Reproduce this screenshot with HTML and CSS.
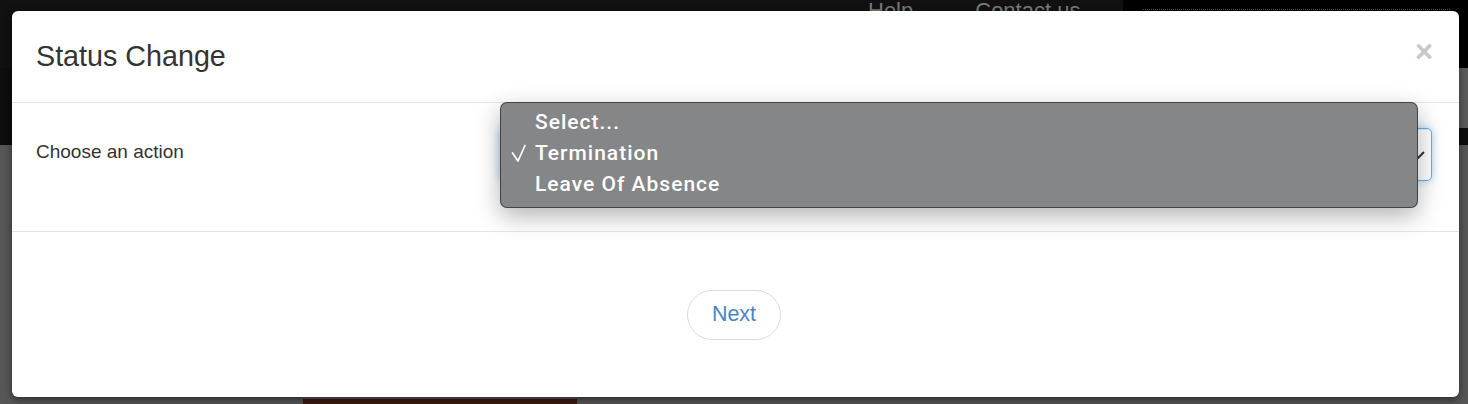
FILE: index.html
```html
<!DOCTYPE html>
<html lang="en">
<head>
<meta charset="utf-8">
<title>Status Change</title>
<link rel="stylesheet" href="styles.css">
</head>
<body>
  <div class="page">
    <header class="nav">
      <nav class="nav-main">
        <a class="nav-link">Help</a>
        <a class="nav-link">Contact us</a>
      </nav>
      <div class="nav-dark"><span class="dots"></span></div>
    </header>
    <div class="sub">
      <div class="sub-left"></div>
      <div class="sub-right"></div>
    </div>
    <main class="main">
      <div class="brown"></div>
    </main>
  </div>

  <div class="modal">
    <div class="modal-header">
      <h4 class="modal-title">Status Change</h4>
      <span class="close">&times;</span>
    </div>
    <div class="modal-body">
      <label class="label">Choose an action</label>
      <div class="select">
        <svg class="arrow" width="16" height="9" viewBox="0 0 16 9"><polyline points="1,1 8,8 15,1" fill="none" stroke="#333" stroke-width="2"/></svg>
        <ul class="menu">
          <li class="item">Select...</li>
          <li class="item">
            <svg class="check" width="16" height="19" viewBox="0 0 16 19"><polyline points="1.5,9 7,17 14,1.5" fill="none" stroke="#fff" stroke-width="1.7" stroke-linejoin="round" stroke-linecap="round"/></svg>
            Termination
          </li>
          <li class="item">Leave Of Absence</li>
        </ul>
      </div>
    </div>
    <div class="modal-footer">
      <button class="btn-next">Next</button>
    </div>
  </div>
</body>
</html>
```

FILE: styles.css
```css
html, body {
  margin: 0;
  padding: 0;
}

body {
  width: 1468px;
  height: 404px;
  overflow: hidden;
  position: relative;
  font-family: "Liberation Sans", Arial, sans-serif;
  background: #585858;
}

.page {
  display: flex;
  flex-direction: column;
  height: 404px;
}

.nav {
  height: 68px;
  display: flex;
  background: #111;
}

.nav-main {
  width: 1123px;
  display: flex;
  gap: 62px;
  padding-left: 868px;
  box-sizing: border-box;
}

.nav-link {
  color: #7a7a7a;
  font-size: 22px;
  line-height: 1;
}

.nav-dark {
  flex: 1;
  background: #000;
  padding: 9px 18px 0 20px;
}

.dots {
  display: block;
  border-top: 1px dotted #555;
}

.sub {
  height: 77px;
  display: flex;
}

.sub-left {
  width: 400px;
  background: #0d0d0d;
}

.sub-right {
  flex: 1;
  background: linear-gradient(#5c5c5c 0 60px, #0d0d0d 60px);
}

.main {
  flex: 1;
  display: flex;
  flex-direction: column;
  justify-content: flex-end;
  background: #575757;
}

.brown {
  margin-left: 303px;
  width: 274px;
  height: 5px;
  background: #3b1b12;
}

/* Modal */
.modal {
  position: absolute;
  top: 11px;
  left: 12px;
  width: 1447px;
  height: 386px;
  background: #fff;
  border-radius: 6px;
  box-shadow: 0 3px 9px rgba(0, 0, 0, 0.5);
  display: flex;
  flex-direction: column;
}

.modal-header {
  height: 92px;
  box-sizing: border-box;
  padding: 0 26px 0 24px;
  display: flex;
  align-items: center;
  justify-content: space-between;
  border-bottom: 1px solid #e5e5e5;
}

.modal-title {
  margin: 0;
  font-size: 28.7px;
  font-weight: normal;
  color: #333;
  line-height: 1.1;
}

.close {
  font-size: 31px;
  font-weight: bold;
  color: #c8c8c8;
  line-height: 1;
  margin-top: -10px;
}

.modal-body {
  height: 129px;
  box-sizing: border-box;
  padding: 25px 27px 0 24px;
  display: flex;
  align-items: flex-start;
  border-bottom: 1px solid #e5e5e5;
}

.label {
  width: 464px;
  font-size: 19px;
  color: #333;
  line-height: 48px;
}

.select {
  flex: 1;
  height: 53px;
  box-sizing: border-box;
  position: relative;
  border: 1px solid #66afe9;
  border-radius: 5px;
  box-shadow: inset 0 1px 1px rgba(0, 0, 0, 0.075), 0 0 8px rgba(102, 175, 233, 0.6);
  background: #fff;
}

.arrow {
  position: absolute;
  right: 6px;
  top: 22px;
}

.menu {
  position: absolute;
  top: -27px;
  left: -1px;
  right: 13px;
  height: 106px;
  box-sizing: border-box;
  margin: 0;
  padding: 4px 0;
  list-style: none;
  background: #858687;
  border: 1px solid rgba(0, 0, 0, 0.5);
  border-radius: 7px;
  box-shadow: 0 8px 24px rgba(0, 0, 0, 0.3);
}

.item {
  position: relative;
  height: 31px;
  line-height: 31px;
  padding-left: 34px;
  color: #fff;
  font-family: Roboto, "Liberation Sans", Arial, sans-serif;
  font-size: 21px;
  font-weight: 500;
  letter-spacing: 1px;
}

.check {
  position: absolute;
  left: 10px;
  top: 6px;
}

.modal-footer {
  flex: 1;
  display: flex;
  align-items: center;
  justify-content: center;
}

.btn-next {
  width: 94px;
  height: 50px;
  margin-right: 3px;
  box-sizing: border-box;
  border: 1px solid #dcdcdc;
  border-radius: 25px;
  background: #fff;
  color: #4a86c4;
  font-family: "Liberation Sans", Arial, sans-serif;
  font-size: 21.5px;
  padding: 0;
}
```
